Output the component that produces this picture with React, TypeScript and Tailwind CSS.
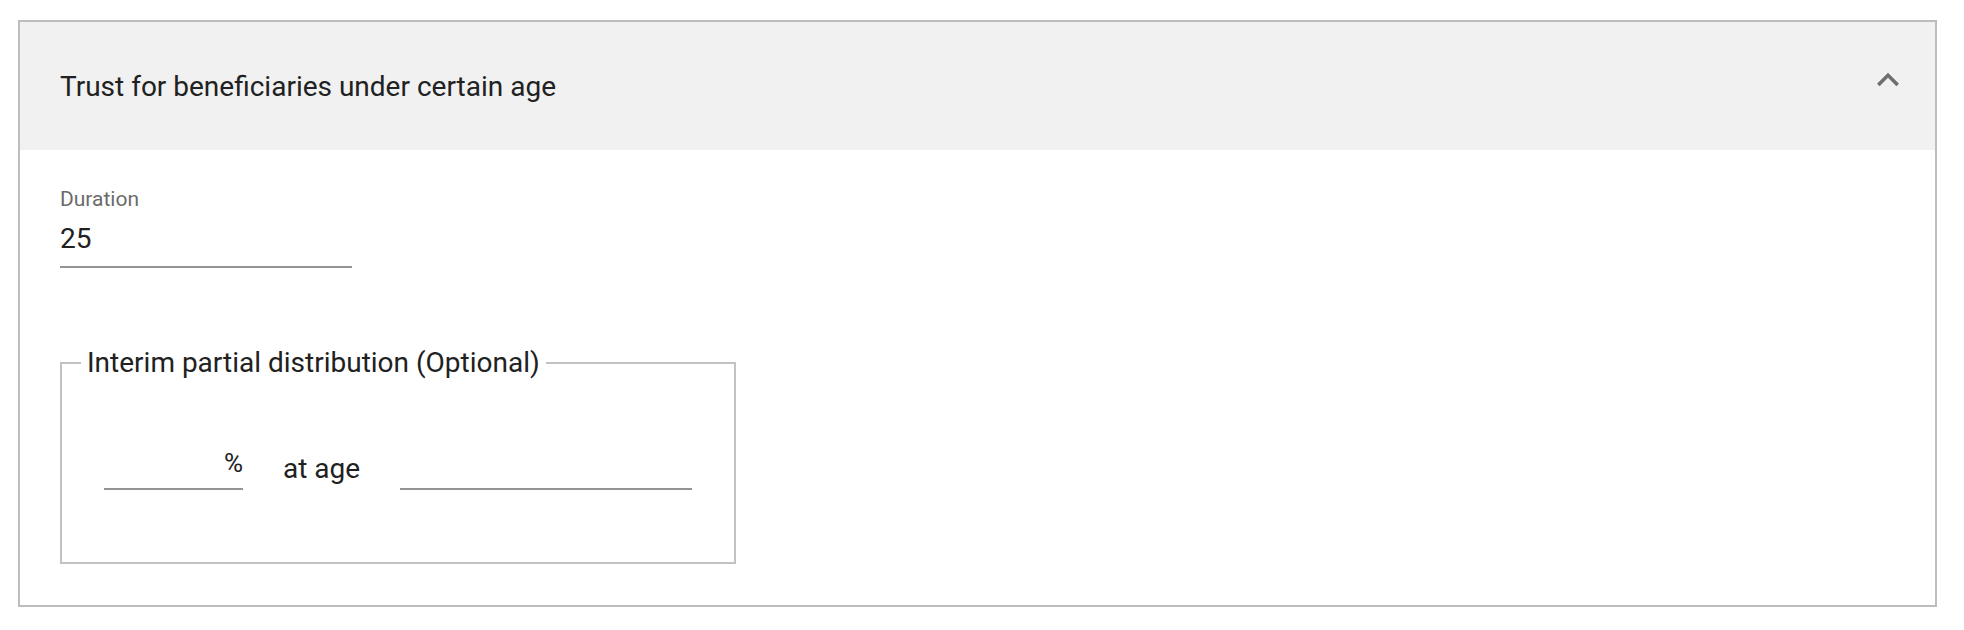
const font = "font-['Roboto','Noto_Sans',sans-serif]";

function UnderlineField({ width, suffix }: { width: string; suffix?: string }) {
  return (
    <div className={`${width} h-[44px] flex items-end justify-end border-b-2 border-[#949494] pb-[12px]`}>
      {suffix && <span className="text-[26px] leading-[26px] text-[#212121]">{suffix}</span>}
    </div>
  );
}

export default function App() {
  return (
    <div className={`min-h-screen bg-white pl-[18px] pt-[20px] ${font}`}>
      <div className="w-[1919px] border-2 border-[#bdbdbd]">
        <div className="h-[128px] bg-[#f1f1f1] flex items-center justify-between pl-[40px] pr-[25px]">
          <span className="mt-[2px] text-[28px] leading-[28px] text-[#212121]">
            Trust for beneficiaries under certain age
          </span>
          <span className="mb-[12px] w-[44px] h-[44px] flex items-center justify-center">
            <svg viewBox="0 0 24 24" className="w-[44px] h-[44px]" fill="#6f6f6f">
              <path d="M12 8l-6 6 1.41 1.41L12 10.83l4.59 4.58L18 14z" />
            </svg>
          </span>
        </div>

        <div className="flex flex-col items-start pl-[40px] pt-[39px] pb-[41px]">
          <div className="w-[292px] border-b-2 border-[#949494] pb-[13px]">
            <div className="text-[21px] leading-[21px] text-[#6b6b6b]">Duration</div>
            <div className="mt-[15px] text-[28px] leading-[28px] text-[#212121]">25</div>
          </div>

          <fieldset className="mt-[81px] w-fit border-2 border-[#c2c2c2] pb-[72px]">
            <legend className="ml-[19px] px-[6px] text-[28px] leading-[28px] text-[#212121]">
              Interim partial distribution (Optional)
            </legend>
            <div className="flex items-end px-[42px] pt-[69px]">
              <UnderlineField width="w-[139px]" suffix="%" />
              <span className="mx-[40px] mb-[7px] text-[28px] leading-[28px] text-[#212121]">at age</span>
              <UnderlineField width="w-[292px]" />
            </div>
          </fieldset>
        </div>
      </div>
    </div>
  );
}
